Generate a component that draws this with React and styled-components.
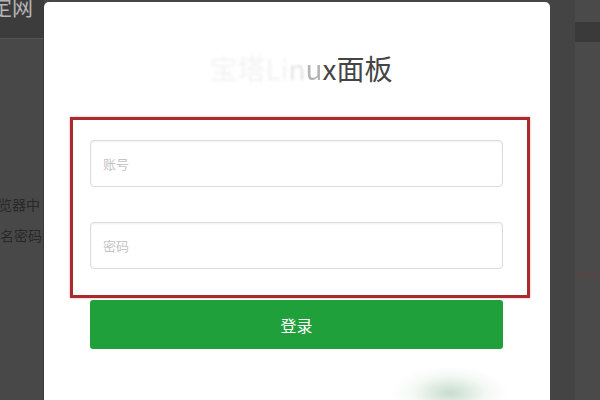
import styled, { createGlobalStyle } from "styled-components";

const GlobalStyle = createGlobalStyle`
  html, body {
    margin: 0;
    padding: 0;
    width: 600px;
    height: 400px;
    overflow: hidden;
    background: #474747;
    font-family: "Noto Sans CJK SC", "Noto Sans", "Liberation Sans", sans-serif;
  }
`;

const Page = styled.div`
  display: grid;
  grid-template-columns: 44px 506px 50px;
  width: 600px;
  height: 400px;
  overflow: hidden;
`;

const LeftSide = styled.div`
  display: flex;
  flex-direction: column;
  background: #484848;
  border-right: 1px solid #3a3a3a;
  overflow: hidden;
`;

const TopBar = styled.div`
  height: 42px;
  background: #3c3c3c;
  border-bottom: 1px solid #555;
  overflow: hidden;
  white-space: nowrap;
  font-size: 21px;
  line-height: 20px;
  color: #b5b5b5;
  margin-left: -9px;
  margin-top: -4px;
`;

const SideLine = styled.div`
  white-space: nowrap;
  font-size: 14px;
  color: #282828;
  margin-left: ${(p) => p.$shift}px;
  margin-top: ${(p) => p.$top}px;
`;

const RightSide = styled.div`
  display: grid;
  grid-template-columns: 25px 1fr;
  background: #444;
`;

const RightPanel = styled.div`
  grid-column: 2;
  display: flex;
  flex-direction: column;
  background: #4a4a4a;
`;

const RightBar = styled.div`
  height: 20px;
  margin-top: 22px;
  background: #3a3a3a;
`;

const RightRule = styled.div`
  height: 1px;
  margin-top: 232px;
  background: #6e3a3a;
`;

const Modal = styled.div`
  margin-top: 2px;
  background: #fff;
  border-radius: 5px 5px 0 0;
  padding-top: 50px;
  display: flex;
  flex-direction: column;
`;

const Title = styled.h1`
  margin: 0;
  text-align: center;
  font-size: 28px;
  line-height: 32px;
  font-weight: 400;
  color: #444;
  padding-left: 8px;
`;

const Faded = styled.span`
  color: ${(p) => p.$tone};
  filter: blur(${(p) => p.$blur}px);
`;

const Highlight = styled.div`
  box-sizing: border-box;
  margin: 33px 0 0 26px;
  width: 460px;
  border: 3px solid #ab2a2d;
  box-shadow: 0 0 2px rgba(200, 60, 60, 0.5);
  padding: 20px 24px 26px 17px;
  display: flex;
  flex-direction: column;
  gap: 35px;
`;

const Field = styled.input`
  height: 47px;
  box-sizing: border-box;
  border: 1px solid #dcdcdc;
  border-radius: 4px;
  box-shadow: inset 0 1px 2px rgba(0, 0, 0, 0.06);
  padding: 0 12px;
  font-family: inherit;
  font-size: 13px;
  color: #555;
  outline: none;

  &::placeholder {
    color: #c4c4c4;
  }
`;

const LoginButton = styled.button`
  margin: 2px 0 0 46px;
  width: 413px;
  height: 49px;
  border: none;
  border-radius: 3px;
  background: #20a03a;
  color: #fff;
  font-family: inherit;
  font-size: 16px;
  cursor: pointer;
`;

const Glow = styled.div`
  align-self: flex-end;
  margin: 16px 40px 0 0;
  width: 120px;
  height: 56px;
  background: radial-gradient(ellipse at center, rgba(120, 170, 130, 0.4) 0%, rgba(200, 225, 205, 0.18) 45%, rgba(255, 255, 255, 0) 70%);
`;

export default function App() {
  return (
    <>
      <GlobalStyle />
      <Page>
        <LeftSide>
          <TopBar>定网</TopBar>
          <SideLine $shift={-2} $top={155}>览器中</SideLine>
          <SideLine $shift={0} $top={11}>名密码</SideLine>
        </LeftSide>
        <Modal>
          <Title>
            <Faded $tone="#f2f2f2" $blur={1.5}>宝塔Li</Faded>
            <Faded $tone="#e6e6e6" $blur={0.8}>n</Faded>
            <Faded $tone="#b4b4b4" $blur={0}>u</Faded>
            x面板
          </Title>
          <Highlight>
            <Field placeholder="账号" />
            <Field type="password" placeholder="密码" />
          </Highlight>
          <LoginButton>登录</LoginButton>
          <Glow />
        </Modal>
        <RightSide>
          <RightPanel>
            <RightBar />
            <RightRule />
          </RightPanel>
        </RightSide>
      </Page>
    </>
  );
}
